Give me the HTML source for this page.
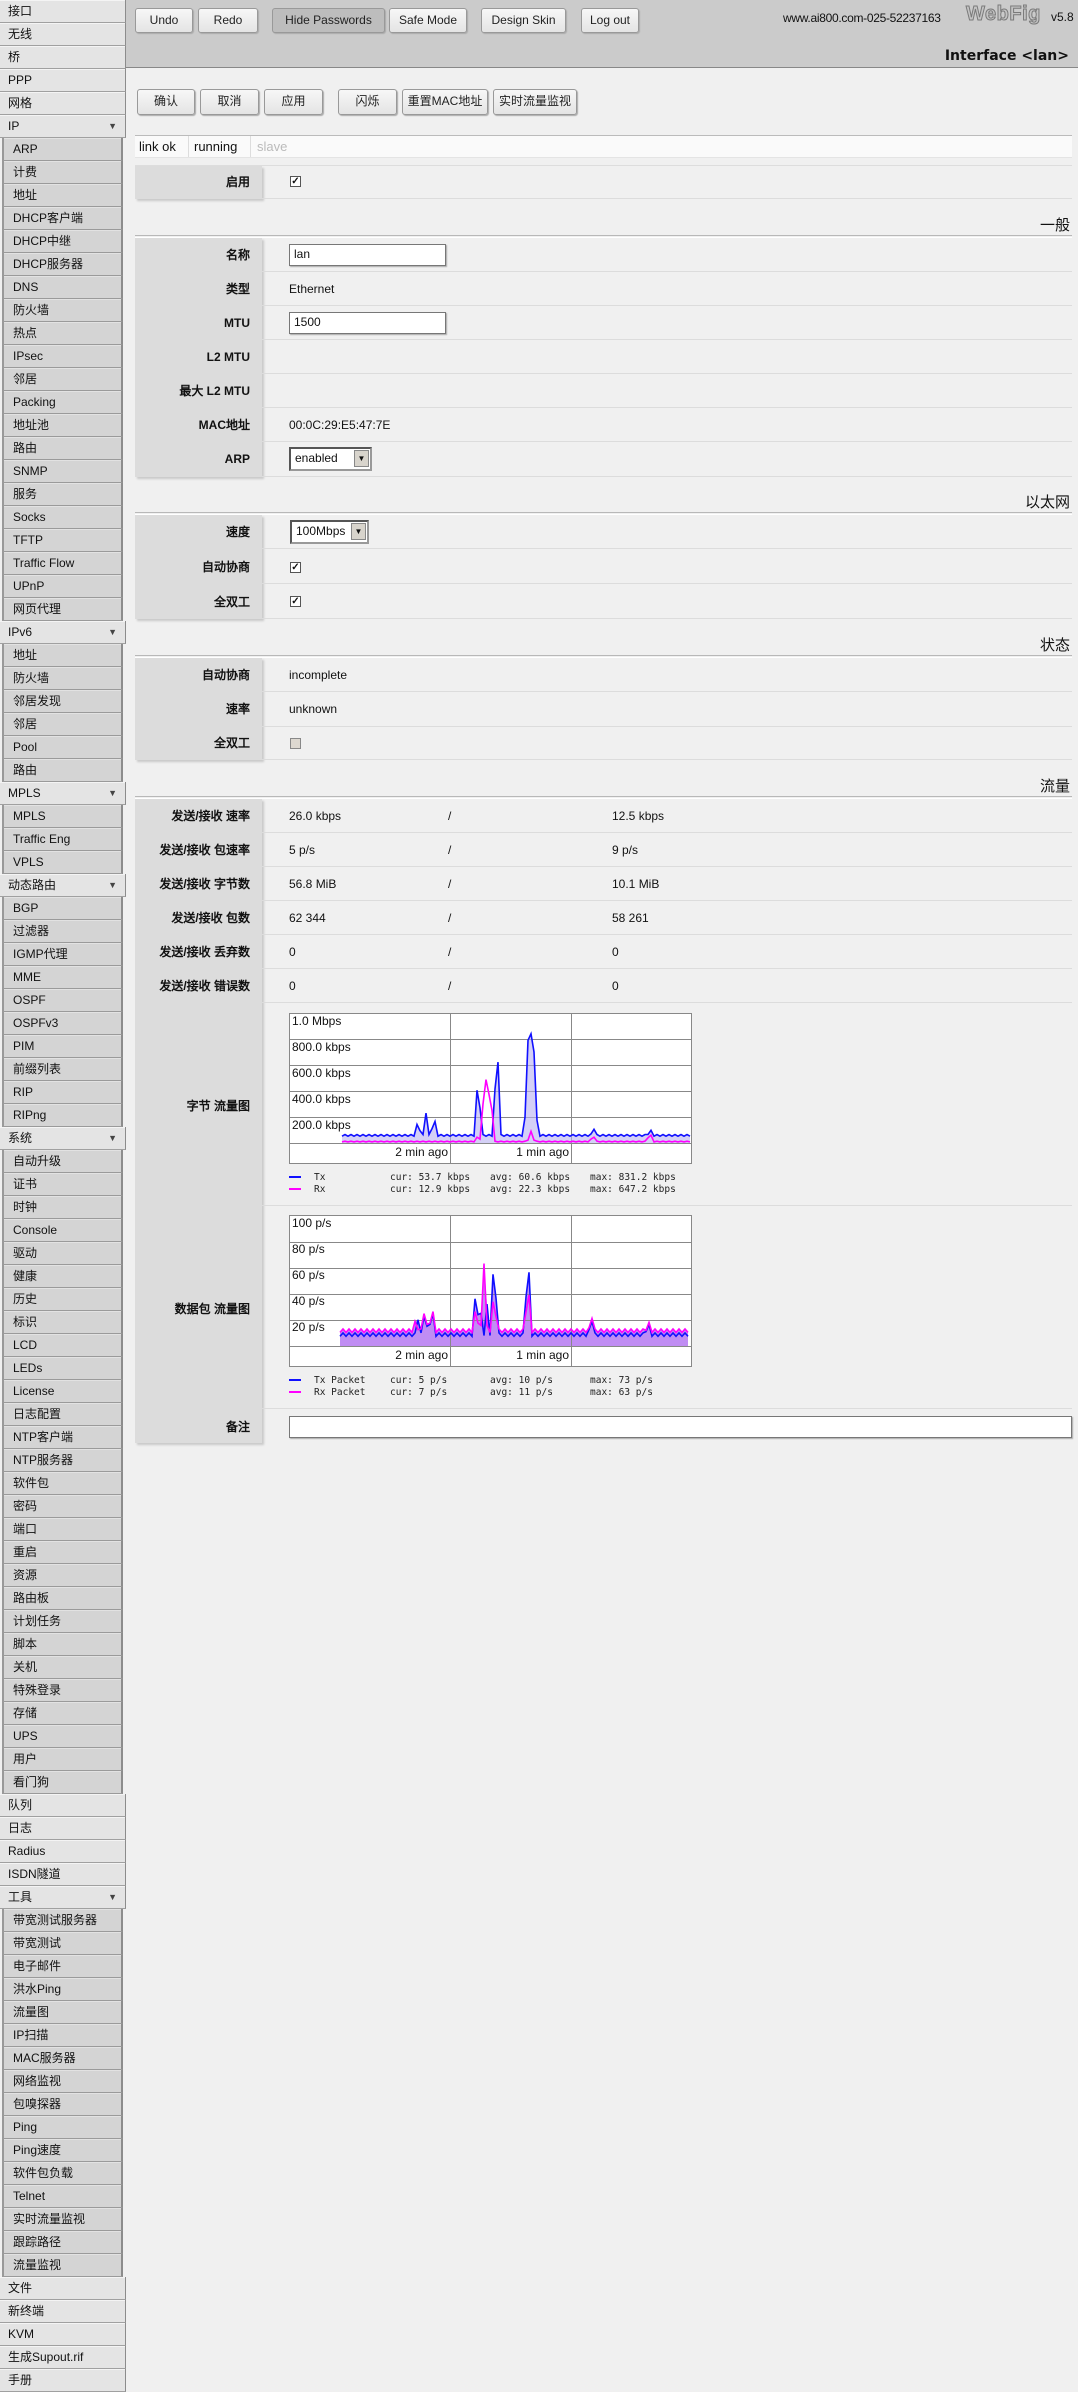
<!DOCTYPE html>
<html><head><meta charset="utf-8">
<style>
*{box-sizing:border-box;margin:0;padding:0}
body{width:1078px;height:2391px;background:#f0f0f0;font-family:"Liberation Sans","WenQuanYi Zen Hei",sans-serif;font-size:12px;color:#111;position:relative;overflow:hidden}
.abs{position:absolute}
#side{position:absolute;left:0;top:0;width:126px}
.it{height:23px;line-height:22px;background:#e4e4e4;border-bottom:1px solid #a0a0a0;border-right:1px solid #8c8c8c;padding-left:8px;position:relative;font-size:12px;box-shadow:inset 0 1px 0 #f4f4f4}
.ch{height:23px;line-height:22px;background:#d4d4d4;border-bottom:1px solid #9a9a9a;border-right:2px solid #8c8c8c;border-left:2px solid #999;margin-left:2px;margin-right:3px;padding-left:9px;font-size:12px;box-shadow:inset 0 1px 0 #e2e2e2}
.arr{position:absolute;right:8px;top:0;font-size:9px;color:#444}
#top{position:absolute;left:126px;top:0;width:952px;height:68px;background:#cbcbcb;border-bottom:1px solid #888}
.btn{position:absolute;height:25px;background:linear-gradient(#f7f7f7,#e4e4e4);border:1px solid #999;border-radius:3px;box-shadow:1px 1px 1px #aaa;text-align:center;line-height:23px;font-size:12px;color:#222}
.lab{position:absolute;left:135px;width:127px;background:#dcdcdc;text-align:right;padding-right:12px;font-weight:bold;font-size:12px;box-shadow:2px 2px 2px #c8c8c8}
.row{position:absolute;left:262px;width:810px;border-bottom:1px solid #dcdcdc}
.val{position:absolute;left:289px;font-size:12px}
.hd{position:absolute;left:135px;width:937px;border-bottom:1px solid #b8b8b8;text-align:right;font-size:15px;padding-right:2px}
.hd:after{content:"";position:absolute;left:0;right:0;bottom:-3px;border-bottom:1px solid #fff}
.inp{position:absolute;background:#fff;border:1px solid #777;box-shadow:1px 1px 1px #aaa;padding-left:4px;font-size:12px;line-height:19px}
.cb{position:absolute;width:11px;height:11px;border:1px solid #555;background:#fff;font-size:10px;line-height:9px;text-align:center;font-weight:bold}
.sel{position:absolute;background:#fff;border:2px solid #555;border-right-color:#999;border-bottom-color:#999;font-size:12px;line-height:19px;padding-left:4px}
.sel b{position:absolute;right:1px;top:1px;width:15px;height:17px;background:#d8d4cc;border:1px solid #888;font-size:8px;text-align:center;line-height:16px;font-weight:normal}
</style></head><body>
<div id="side">
<div class="it">接口</div><div class="it">无线</div><div class="it">桥</div><div class="it">PPP</div><div class="it">网格</div>
<div class="it">IP<span class="arr">▼</span></div>
<div class="ch">ARP</div><div class="ch">计费</div><div class="ch">地址</div><div class="ch">DHCP客户端</div><div class="ch">DHCP中继</div><div class="ch">DHCP服务器</div><div class="ch">DNS</div><div class="ch">防火墙</div><div class="ch">热点</div><div class="ch">IPsec</div><div class="ch">邻居</div><div class="ch">Packing</div><div class="ch">地址池</div><div class="ch">路由</div><div class="ch">SNMP</div><div class="ch">服务</div><div class="ch">Socks</div><div class="ch">TFTP</div><div class="ch">Traffic Flow</div><div class="ch">UPnP</div><div class="ch">网页代理</div>
<div class="it">IPv6<span class="arr">▼</span></div>
<div class="ch">地址</div><div class="ch">防火墙</div><div class="ch">邻居发现</div><div class="ch">邻居</div><div class="ch">Pool</div><div class="ch">路由</div>
<div class="it">MPLS<span class="arr">▼</span></div>
<div class="ch">MPLS</div><div class="ch">Traffic Eng</div><div class="ch">VPLS</div>
<div class="it">动态路由<span class="arr">▼</span></div>
<div class="ch">BGP</div><div class="ch">过滤器</div><div class="ch">IGMP代理</div><div class="ch">MME</div><div class="ch">OSPF</div><div class="ch">OSPFv3</div><div class="ch">PIM</div><div class="ch">前缀列表</div><div class="ch">RIP</div><div class="ch">RIPng</div>
<div class="it">系统<span class="arr">▼</span></div>
<div class="ch">自动升级</div><div class="ch">证书</div><div class="ch">时钟</div><div class="ch">Console</div><div class="ch">驱动</div><div class="ch">健康</div><div class="ch">历史</div><div class="ch">标识</div><div class="ch">LCD</div><div class="ch">LEDs</div><div class="ch">License</div><div class="ch">日志配置</div><div class="ch">NTP客户端</div><div class="ch">NTP服务器</div><div class="ch">软件包</div><div class="ch">密码</div><div class="ch">端口</div><div class="ch">重启</div><div class="ch">资源</div><div class="ch">路由板</div><div class="ch">计划任务</div><div class="ch">脚本</div><div class="ch">关机</div><div class="ch">特殊登录</div><div class="ch">存储</div><div class="ch">UPS</div><div class="ch">用户</div><div class="ch">看门狗</div>
<div class="it">队列</div><div class="it">日志</div><div class="it">Radius</div><div class="it">ISDN隧道</div>
<div class="it">工具<span class="arr">▼</span></div>
<div class="ch">带宽测试服务器</div><div class="ch">带宽测试</div><div class="ch">电子邮件</div><div class="ch">洪水Ping</div><div class="ch">流量图</div><div class="ch">IP扫描</div><div class="ch">MAC服务器</div><div class="ch">网络监视</div><div class="ch">包嗅探器</div><div class="ch">Ping</div><div class="ch">Ping速度</div><div class="ch">软件包负载</div><div class="ch">Telnet</div><div class="ch">实时流量监视</div><div class="ch">跟踪路径</div><div class="ch">流量监视</div>
<div class="it">文件</div><div class="it">新终端</div><div class="it">KVM</div><div class="it">生成Supout.rif</div><div class="it">手册</div>
</div>

<div id="top"></div>
<div class="btn" style="left:135px;top:8px;width:58px">Undo</div>
<div class="btn" style="left:198px;top:8px;width:60px">Redo</div>
<div class="btn" style="left:272px;top:8px;width:113px;background:#bdbdbd">Hide Passwords</div>
<div class="btn" style="left:389px;top:8px;width:78px">Safe Mode</div>
<div class="btn" style="left:481px;top:8px;width:85px">Design Skin</div>
<div class="btn" style="left:581px;top:8px;width:58px">Log out</div>
<div class="abs" style="left:783px;top:11px;font-size:12px;letter-spacing:-0.3px">www.ai800.com-025-52237163</div>
<div class="abs" style="left:966px;top:3px;font-size:20px;font-weight:bold;color:#c4c4c4;-webkit-text-stroke:1px #7a7a7a;letter-spacing:0.5px">WebFig</div>
<div class="abs" style="left:1051px;top:10px;font-size:12px">v5.8</div>
<div class="abs" style="right:9px;top:48px;font-size:14px;font-weight:bold;font-family:'DejaVu Sans',sans-serif">Interface &lt;lan&gt;</div>

<div class="btn" style="left:137px;top:89px;width:58px;height:26px">确认</div>
<div class="btn" style="left:200px;top:89px;width:59px;height:26px">取消</div>
<div class="btn" style="left:264px;top:89px;width:59px;height:26px">应用</div>
<div class="btn" style="left:338px;top:89px;width:59px;height:26px">闪烁</div>
<div class="btn" style="left:402px;top:89px;width:86px;height:26px">重置MAC地址</div>
<div class="btn" style="left:493px;top:89px;width:84px;height:26px">实时流量监视</div>

<div class="abs" style="left:135px;top:135px;width:937px;height:23px;background:#fafafa;border-top:1px solid #bbb;border-bottom:1px solid #e4e4e4;font-size:13px;line-height:21px">
<span class="abs" style="left:4px">link ok</span><span class="abs" style="left:53px;top:0;height:21px;border-left:1px solid #ddd"></span>
<span class="abs" style="left:59px">running</span><span class="abs" style="left:115px;top:0;height:21px;border-left:1px solid #ddd"></span>
<span class="abs" style="left:122px;color:#bbb">slave</span></div>

<div class="abs" style="left:135px;top:165px;width:937px;border-top:1px solid #ddd"></div>
<div class="lab" style="top:166px;height:33px;line-height:33px">启用</div>
<div class="row" style="top:166px;height:33px"></div>
<div class="cb" style="left:290px;top:176px">✓</div>

<div class="hd" style="top:214px;height:22px">一般</div>
<div class="lab" style="top:238px;height:239px"></div>
<div class="abs" style="left:135px;top:238px;width:127px;font-weight:bold;text-align:right;padding-right:12px;line-height:34px">
<div>名称</div><div>类型</div><div>MTU</div><div>L2 MTU</div><div>最大 L2 MTU</div><div>MAC地址</div><div>ARP</div></div>
<div class="row" style="top:238px;height:34px"></div><div class="row" style="top:272px;height:34px"></div><div class="row" style="top:306px;height:34px"></div><div class="row" style="top:340px;height:34px"></div><div class="row" style="top:374px;height:34px"></div><div class="row" style="top:408px;height:34px"></div><div class="row" style="top:442px;height:35px"></div>
<div class="inp" style="left:289px;top:244px;width:157px;height:22px">lan</div>
<div class="val" style="top:282px">Ethernet</div>
<div class="inp" style="left:289px;top:312px;width:157px;height:22px">1500</div>
<div class="val" style="top:418px">00:0C:29:E5:47:7E</div>
<div class="sel" style="left:289px;top:447px;width:83px;height:24px">enabled<b>▼</b></div>

<div class="hd" style="top:491px;height:22px">以太网</div>
<div class="lab" style="top:515px;height:104px"></div>
<div class="abs" style="left:135px;top:515px;width:127px;font-weight:bold;text-align:right;padding-right:12px;line-height:35px"><div>速度</div><div>自动协商</div><div>全双工</div></div>
<div class="row" style="top:515px;height:34px"></div><div class="row" style="top:549px;height:35px"></div><div class="row" style="top:584px;height:35px"></div>
<div class="sel" style="left:290px;top:520px;width:79px;height:24px">100Mbps<b>▼</b></div>
<div class="cb" style="left:290px;top:562px">✓</div>
<div class="cb" style="left:290px;top:596px">✓</div>

<div class="hd" style="top:634px;height:22px">状态</div>
<div class="lab" style="top:658px;height:102px"></div>
<div class="abs" style="left:135px;top:658px;width:127px;font-weight:bold;text-align:right;padding-right:12px;line-height:34px"><div>自动协商</div><div>速率</div><div>全双工</div></div>
<div class="row" style="top:658px;height:34px"></div><div class="row" style="top:692px;height:35px"></div><div class="row" style="top:727px;height:33px"></div>
<div class="val" style="top:668px">incomplete</div>
<div class="val" style="top:702px">unknown</div>
<div class="cb" style="left:290px;top:738px;background:#ddd8d0;border-color:#888"></div>

<div class="hd" style="top:775px;height:22px">流量</div>
<div class="lab" style="top:799px;height:644px"></div>
<div class="abs" style="left:135px;top:799px;width:127px;font-weight:bold;text-align:right;padding-right:12px;line-height:34px">
<div>发送/接收 速率</div><div>发送/接收 包速率</div><div>发送/接收 字节数</div><div>发送/接收 包数</div><div>发送/接收 丢弃数</div><div>发送/接收 错误数</div></div>
<div class="row" style="top:799px;height:34px"></div><div class="row" style="top:833px;height:34px"></div><div class="row" style="top:867px;height:34px"></div><div class="row" style="top:901px;height:34px"></div><div class="row" style="top:935px;height:34px"></div><div class="row" style="top:969px;height:34px"></div>
<div class="row" style="top:1003px;height:203px"></div><div class="row" style="top:1206px;height:203px"></div>
<div class="abs" style="left:289px;top:799px;line-height:34px"><div>26.0 kbps</div><div>5 p/s</div><div>56.8 MiB</div><div>62 344</div><div>0</div><div>0</div></div>
<div class="abs" style="left:448px;top:799px;line-height:34px"><div>/</div><div>/</div><div>/</div><div>/</div><div>/</div><div>/</div></div>
<div class="abs" style="left:612px;top:799px;line-height:34px"><div>12.5 kbps</div><div>9 p/s</div><div>10.1 MiB</div><div>58 261</div><div>0</div><div>0</div></div>
<div class="abs" style="left:135px;top:1097px;width:127px;font-weight:bold;text-align:right;padding-right:12px">字节 流量图</div>
<div class="abs" style="left:135px;top:1300px;width:127px;font-weight:bold;text-align:right;padding-right:12px">数据包 流量图</div>

<svg class="abs" style="left:0;top:0" width="1078" height="1420">
<rect x="289.5" y="1013.5" width="402" height="150" fill="#fff" stroke="#888"/>
<g stroke="#888" stroke-width="1">
<line x1="290" y1="1039.5" x2="691" y2="1039.5"/><line x1="290" y1="1065.5" x2="691" y2="1065.5"/><line x1="290" y1="1091.5" x2="691" y2="1091.5"/><line x1="290" y1="1117.5" x2="691" y2="1117.5"/><line x1="290" y1="1143.5" x2="691" y2="1143.5"/>
<line x1="450.5" y1="1014" x2="450.5" y2="1163"/><line x1="571.5" y1="1014" x2="571.5" y2="1163"/>
</g>
<g font-family="Liberation Sans, sans-serif" font-size="12" fill="#111">
<text x="292" y="1025">1.0 Mbps</text><text x="292" y="1051">800.0 kbps</text><text x="292" y="1077">600.0 kbps</text><text x="292" y="1103">400.0 kbps</text><text x="292" y="1129">200.0 kbps</text>
<text x="448" y="1156" text-anchor="end">2 min ago</text><text x="569" y="1156" text-anchor="end">1 min ago</text>
</g>
<path id="f1" fill="#b8b0f0" fill-opacity="0.6"/><polyline id="t1" fill="none" stroke="#1010ff" stroke-width="1.6"/><polyline id="r1" fill="none" stroke="#ff00ff" stroke-width="1.6"/>
<g font-family="DejaVu Sans Mono, monospace" font-size="9.5" fill="#222">
<line x1="289" y1="1177" x2="301" y2="1177" stroke="#1010ff" stroke-width="2"/><line x1="289" y1="1189" x2="301" y2="1189" stroke="#ff00ff" stroke-width="2"/>
<text x="314" y="1180">Tx</text><text x="314" y="1192">Rx</text>
<text x="390" y="1180">cur: 53.7 kbps</text><text x="390" y="1192">cur: 12.9 kbps</text>
<text x="490" y="1180">avg: 60.6 kbps</text><text x="490" y="1192">avg: 22.3 kbps</text>
<text x="590" y="1180">max: 831.2 kbps</text><text x="590" y="1192">max: 647.2 kbps</text>
</g>

<rect x="289.5" y="1215.5" width="402" height="151" fill="#fff" stroke="#888"/>
<path id="f2" fill="#b070f0" fill-opacity="0.8"/>
<g stroke="#888" stroke-width="1">
<line x1="290" y1="1242.5" x2="691" y2="1242.5"/><line x1="290" y1="1268.5" x2="691" y2="1268.5"/><line x1="290" y1="1294.5" x2="691" y2="1294.5"/><line x1="290" y1="1320.5" x2="691" y2="1320.5"/><line x1="290" y1="1346.5" x2="691" y2="1346.5"/>
<line x1="450.5" y1="1216" x2="450.5" y2="1366"/><line x1="571.5" y1="1216" x2="571.5" y2="1366"/>
</g>
<polyline id="t2" fill="none" stroke="#1010ff" stroke-width="1.6"/><polyline id="r2" fill="none" stroke="#ff00ff" stroke-width="1.6"/>
<g font-family="Liberation Sans, sans-serif" font-size="12" fill="#111">
<text x="292" y="1227">100 p/s</text><text x="292" y="1253">80 p/s</text><text x="292" y="1279">60 p/s</text><text x="292" y="1305">40 p/s</text><text x="292" y="1331">20 p/s</text>
<text x="448" y="1359" text-anchor="end">2 min ago</text><text x="569" y="1359" text-anchor="end">1 min ago</text>
</g>
<g font-family="DejaVu Sans Mono, monospace" font-size="9.5" fill="#222">
<line x1="289" y1="1380" x2="301" y2="1380" stroke="#1010ff" stroke-width="2"/><line x1="289" y1="1392" x2="301" y2="1392" stroke="#ff00ff" stroke-width="2"/>
<text x="314" y="1383">Tx Packet</text><text x="314" y="1395">Rx Packet</text>
<text x="390" y="1383">cur: 5 p/s</text><text x="390" y="1395">cur: 7 p/s</text>
<text x="490" y="1383">avg: 10 p/s</text><text x="490" y="1395">avg: 11 p/s</text>
<text x="590" y="1383">max: 73 p/s</text><text x="590" y="1395">max: 63 p/s</text>
</g>
</svg>

<div class="abs" style="left:135px;top:1418px;width:127px;font-weight:bold;text-align:right;padding-right:12px">备注</div>
<div class="inp" style="left:289px;top:1416px;width:783px;height:22px"></div>

<script>
function series(base,amp,peaks,b0,k,x0,x1){
 var pts=[];
 for(var x=x0,i=0;x<=x1;x+=3,i++){
  var v=base+(i%2?amp:-amp*0.3);
  for(var j=0;j<peaks.length;j++){var d=Math.abs(x-peaks[j][0]);if(d<4){var pv=peaks[j][1]*(1-d/4);if(pv>v)v=pv;}}
  pts.push([x,b0-v*k]);
 }
 return pts;
}
function str(p){return p.map(function(a){return a[0]+","+a[1].toFixed(1)}).join(" ");}
function fill(p,b0){return "M"+p[0][0]+","+b0+" L"+str(p).split(" ").join(" L")+" L"+p[p.length-1][0]+","+b0+" Z";}
var t1=series(55,10,[[406,80],[418,190],[426,230],[434,220],[478,540],[497,830],[528,790],[531,840],[534,700],[593,140],[650,130]],1143,0.13,342,690);
var r1=series(10,4,[[478,60],[484,400],[487,650],[490,500],[531,90],[593,60],[650,80]],1143,0.13,342,690);
document.getElementById('t1').setAttribute('points',str(t1));
document.getElementById('r1').setAttribute('points',str(r1));
document.getElementById('f1').setAttribute('d',fill(t1,1143));
var t2=series(8,2,[[418,20],[425,30],[432,33],[476,48],[481,25],[487,32],[494,73],[528,75],[591,25],[648,22]],1346,1.31,340,690);
var r2=series(11,2,[[416,25],[425,33],[432,35],[476,35],[484,63],[494,45],[528,52],[591,28],[648,24]],1346,1.31,340,690);
var m2=t2.map(function(a,i){return [a[0],Math.min(a[1],r2[i][1])]});
document.getElementById('t2').setAttribute('points',str(t2));
document.getElementById('r2').setAttribute('points',str(r2));
document.getElementById('f2').setAttribute('d',fill(m2,1346));
</script>
</body></html>
